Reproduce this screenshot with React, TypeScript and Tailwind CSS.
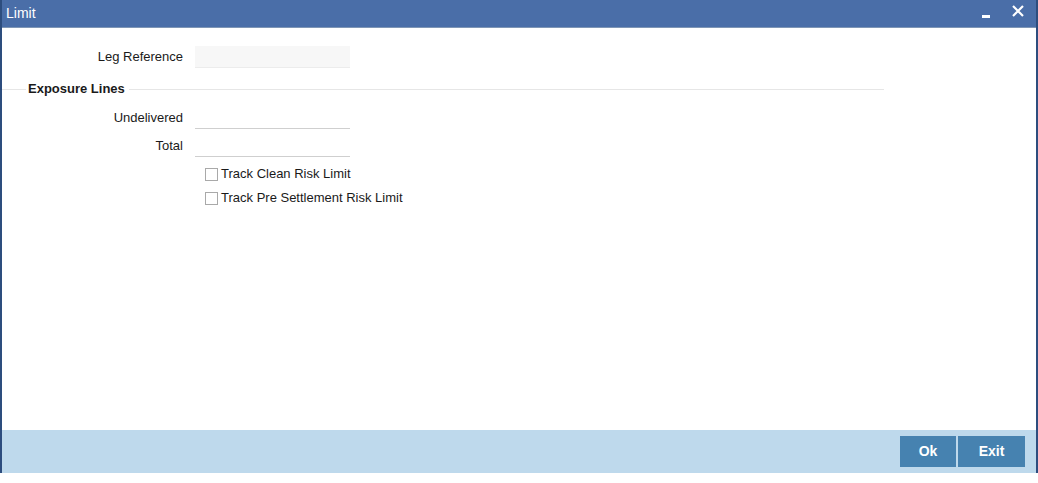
import React from "react";

const labelCls = "w-[181px] shrink-0 text-right text-[13px] text-[#1a1a1a]";

const Field: React.FC<{ label: string; shaded?: boolean }> = ({ label, shaded }) => (
  <div className="flex items-center h-[22px]">
    <div className={labelCls}>{label}</div>
    <div
      className={
        shaded
          ? "ml-3 w-[155px] h-[22px] bg-[#f7f7f7] border-b border-[#ececec]"
          : "ml-3 w-[155px] h-[22px] border-b border-[#cfcfcf]"
      }
    />
  </div>
);

const Check: React.FC<{ label: string }> = ({ label }) => (
  <label className="flex items-center h-[14px] pl-[203px]">
    <span className="w-[13px] h-[13px] border border-[#a9a9a9] bg-white" />
    <span className="ml-[3px] text-[13px] text-[#1a1a1a]">{label}</span>
  </label>
);

export default function App() {
  return (
    <div
      className="w-[1038px] h-[483px] bg-white"
      style={{ fontFamily: '"Liberation Sans", Arial, sans-serif' }}
    >
      <div className="h-[473px] flex flex-col border-x-2 border-[#2d4d7e]">
        {/* title bar */}
        <div className="h-[28px] shrink-0 bg-[#4a6ea8] border-b border-[#7f96b5] flex items-center pl-[4px] pr-[12px]">
          <span className="text-white text-[14px]">Limit</span>
          <div className="ml-auto flex items-center gap-[22px]">
            <span className="block w-[8px] h-[3px] bg-white mt-[6px]" />
            <svg width="12" height="12" viewBox="0 0 12 12" className="-mt-[5px]">
              <path d="M1 1 L11 11 M11 1 L1 11" stroke="white" strokeWidth="2.2" />
            </svg>
          </div>
        </div>

        {/* body */}
        <div className="flex-1 pt-[18px]">
          <Field label="Leg Reference" shaded />

          <div className="mt-[12px] flex items-center h-[18px] w-[882px]">
            <div className="w-[24px] border-t border-[#e6e6e6]" />
            <span className="ml-[2px] text-[13px] font-bold text-[#1a1a1a]">Exposure Lines</span>
            <div className="ml-[4px] flex-1 border-t border-[#e6e6e6]" />
          </div>

          <div className="mt-[9px] flex flex-col gap-[6px]">
            <Field label="Undelivered" />
            <Field label="Total" />
          </div>

          <div className="mt-[10px] flex flex-col gap-[10px]">
            <Check label="Track Clean Risk Limit" />
            <Check label="Track Pre Settlement Risk Limit" />
          </div>
        </div>

        {/* footer */}
        <div className="h-[43px] shrink-0 bg-[#bed9ec] flex items-center justify-end gap-[2px] pr-[11px]">
          <button className="w-[56px] h-[31px] bg-[#4682b0] text-white text-[14px] font-bold">
            Ok
          </button>
          <button className="w-[67px] h-[31px] bg-[#4682b0] text-white text-[14px] font-bold">
            Exit
          </button>
        </div>
      </div>
    </div>
  );
}
